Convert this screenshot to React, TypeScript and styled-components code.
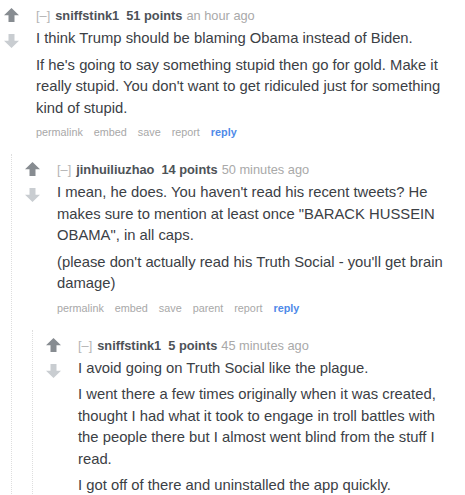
import React from "react";
import styled, { createGlobalStyle } from "styled-components";

const GlobalStyle = createGlobalStyle`
  html, body {
    margin: 0;
    padding: 0;
    background: #ffffff;
  }
  body {
    font-family: "Liberation Sans", Arial, Helvetica, sans-serif;
  }
`;

type CommentData = {
  author: string;
  points: number;
  time: string;
  paragraphs: string[];
  actions: string[];
  child?: CommentData;
};

const thread: CommentData = {
  author: "sniffstink1",
  points: 51,
  time: "an hour ago",
  paragraphs: [
    "I think Trump should be blaming Obama instead of Biden.",
    "If he's going to say something stupid then go for gold. Make it really stupid. You don't want to get ridiculed just for something kind of stupid.",
  ],
  actions: ["permalink", "embed", "save", "report"],
  child: {
    author: "jinhuiliuzhao",
    points: 14,
    time: "50 minutes ago",
    paragraphs: [
      "I mean, he does. You haven't read his recent tweets? He makes sure to mention at least once \"BARACK HUSSEIN OBAMA\", in all caps.",
      "(please don't actually read his Truth Social - you'll get brain damage)",
    ],
    actions: ["permalink", "embed", "save", "parent", "report"],
    child: {
      author: "sniffstink1",
      points: 5,
      time: "45 minutes ago",
      paragraphs: [
        "I avoid going on Truth Social like the plague.",
        "I went there a few times originally when it was created, thought I had what it took to engage in troll battles with the people there but I almost went blind from the stuff I read.",
        "I got off of there and uninstalled the app quickly.",
      ],
      actions: [],
    },
  },
};

const Page = styled.div`
  width: 465px;
  height: 495px;
  overflow: hidden;
  padding-right: 8px;
  box-sizing: border-box;
`;

const CommentBox = styled.div`
  padding: 8px 0 0 4px;
`;

const Entry = styled.div`
  display: flex;
  align-items: flex-start;
`;

const VoteColumn = styled.div`
  width: 15px;
  flex: 0 0 15px;
  margin-right: 17px;
  display: flex;
  flex-direction: column;
  gap: 12px;
`;

const Arrow = styled.svg<{ $down?: boolean }>`
  display: block;
  width: 15px;
  height: 14px;
  fill: ${({ $down }) => ($down ? "#c9cdd1" : "#878c91")};
  transform: ${({ $down }) => ($down ? "rotate(180deg)" : "none")};
`;

const Content = styled.div`
  flex: 1;
  min-width: 0;
`;

const Tagline = styled.div`
  font-size: 12.8px;
  line-height: 16px;
  color: #aaaaaa;
  white-space: nowrap;
`;

const Expand = styled.span`
  color: #b4b4b4;
  margin-right: 5px;
`;

const Strong = styled.span<{ $wide?: boolean }>`
  font-weight: bold;
  color: #4d5257;
  margin-right: ${({ $wide }) => ($wide ? "7px" : "4px")};
`;

const Time = styled.span`
  color: #a9a9a9;
`;

const Body = styled.div`
  margin-top: 4px;
  font-size: 14.8px;
  line-height: 21.5px;
  color: #3b4045;
`;

const Para = styled.p`
  margin: 0 0 5px;
`;

const Actions = styled.ul`
  list-style: none;
  margin: 0;
  padding: 0;
  display: flex;
  gap: 11px;
  font-size: 10.8px;
  line-height: 16px;
  color: #a8a8a8;
`;

const ActionItem = styled.li<{ $primary?: boolean }>`
  color: ${({ $primary }) => ($primary ? "#4f8ae8" : "#a8a8a8")};
  font-weight: ${({ $primary }) => ($primary ? "bold" : "normal")};
`;

const Children = styled.div`
  margin: 14px 0 0 7px;
  border-left: 1px dotted #dedede;
  padding-left: 9px;
`;

function VoteArrow({ down }: { down?: boolean }) {
  return (
    <Arrow $down={down} viewBox="0 0 15 14">
      <path d="M7.5 0 L15 7.2 H10.5 V14 H4.5 V7.2 H0 Z" />
    </Arrow>
  );
}

function Comment({ data }: { data: CommentData }) {
  return (
    <CommentBox>
      <Entry>
        <VoteColumn>
          <VoteArrow />
          <VoteArrow down />
        </VoteColumn>
        <Content>
          <Tagline>
            <Expand>[–]</Expand>
            <Strong $wide>{data.author}</Strong>
            <Strong>{data.points} points</Strong>
            <Time>{data.time}</Time>
          </Tagline>
          <Body>
            {data.paragraphs.map((p, i) => (
              <Para key={i}>{p}</Para>
            ))}
          </Body>
          {data.actions.length > 0 && (
            <Actions>
              {data.actions.map((a) => (
                <ActionItem key={a}>{a}</ActionItem>
              ))}
              <ActionItem $primary>reply</ActionItem>
            </Actions>
          )}
        </Content>
      </Entry>
      {data.child && (
        <Children>
          <Comment data={data.child} />
        </Children>
      )}
    </CommentBox>
  );
}

export default function App() {
  return (
    <>
      <GlobalStyle />
      <Page>
        <Comment data={thread} />
      </Page>
    </>
  );
}
